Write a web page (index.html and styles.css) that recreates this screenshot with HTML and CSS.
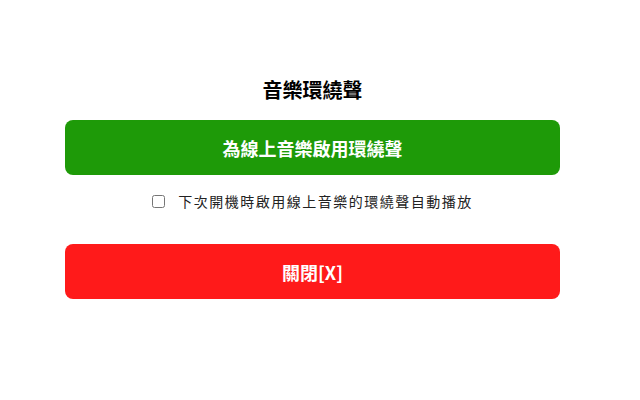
FILE: index.html
```html
<!DOCTYPE html>
<html lang="zh-Hant">
<head>
<meta charset="utf-8">
<link rel="stylesheet" href="styles.css">
</head>
<body>
<div class="panel">
  <h1 class="title">音樂環繞聲</h1>
  <button class="btn btn-green">為線上音樂啟用環繞聲</button>
  <label class="opt"><input type="checkbox" class="chk"><span class="opt-text">下次開機時啟用線上音樂的環繞聲自動播放</span></label>
  <button class="btn btn-red">關閉[X]</button>
</div>
</body>
</html>
```

FILE: styles.css
```css
html, body {
  margin: 0;
  padding: 0;
  background: #fff;
}
body {
  font-family: "Noto Sans CJK TC", "Noto Sans", sans-serif;
}
.panel {
  width: 495px;
  margin-left: 65px;
  padding-top: 76px;
  display: flex;
  flex-direction: column;
}
.title {
  margin: 0;
  font-size: 20px;
  line-height: 28px;
  font-weight: 700;
  color: #000;
  text-align: center;
}
.btn {
  border: 0;
  border-radius: 8px;
  height: 55px;
  width: 100%;
  color: #fff;
  font-family: inherit;
  font-size: 18px;
  font-weight: 700;
  padding: 0;
  cursor: pointer;
}
.btn-green {
  margin-top: 16px;
  background: #1e9a08;
}
.btn-red {
  margin-top: 33px;
  background: #ff1a1a;
}
.opt {
  margin-top: 16px;
  height: 20px;
  display: flex;
  align-items: center;
  justify-content: center;
  padding-left: 0;
}
.chk {
  width: 13px;
  height: 13px;
  margin: 0 13px 0 0;
}
.opt-text {
  font-size: 14px;
  letter-spacing: 1.5px;
  color: #222;
  line-height: 20px;
}
```
